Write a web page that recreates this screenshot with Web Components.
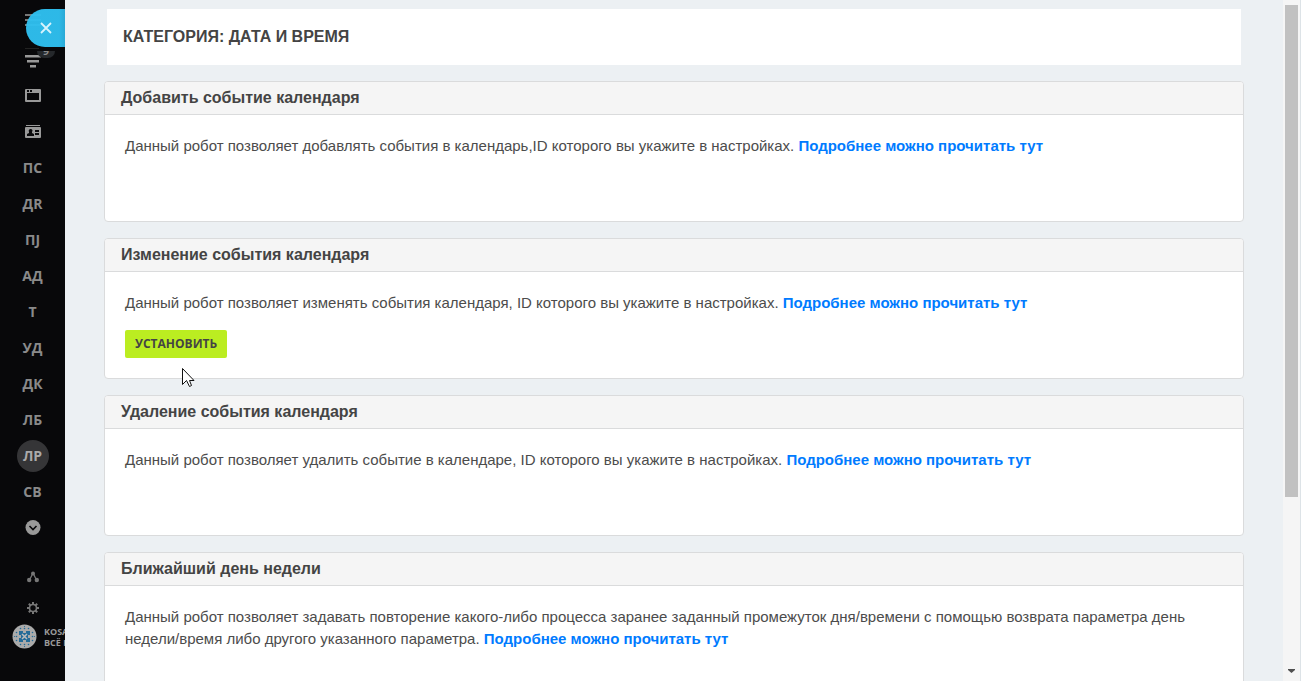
<!DOCTYPE html>
<html lang="ru">
<head>
<meta charset="utf-8">
<meta name="viewport" content="width=device-width, initial-scale=1">
<title>Роботы: дата и время</title>
<style>
    html, body {
        margin: 0;
        height: 100%;
        overflow: hidden;
    }
    body {
        font-family: "Liberation Sans", Arial, sans-serif;
        color: #444;
        background: #ecf0f3;
    }
    svg {
        display: block;
        flex-shrink: 0;
    }
</style>
</head>
<body>
<app-shell>
    <side-menu slot="menu">
        <menu-item label="Фильтр">
            <svg width="16" height="16" viewBox="0 0 16 16">
                <path d="M0 3h16v2.600H0zM2 8h12v2.600H2zM5 13h6v2.600H5z" fill="#999"/>
            </svg>
        </menu-item>
        <menu-item label="Сайты">
            <svg width="16" height="14" viewBox="0 0 16 14">
                <path fill-rule="evenodd" d="M1 0h14a1 1 0 0 1 1 1v11a1 1 0 0 1-1 1H1a1 1 0 0 1-1-1V1a1 1 0 0 1 1-1zM2 4v7h12V4zM2 1v2h2V1zM5 1v2h2V1z" fill="#999"/>
            </svg>
        </menu-item>
        <menu-item label="Контакты">
            <svg width="16" height="14" viewBox="0 0 16 14">
                <path d="M1 0h14v1H1z" fill="#999"/>
                <rect y="2" width="16" height="11" rx="1" fill="#999"/>
                <path d="M6 4a2 2 0 0 1 1 3l0 1 2 1v2H2V9l2-1V7a2 2 0 0 1 2-3zM10 5h4v2h-4zM10 8h4v2h-4z" fill="#08080a"/>
            </svg>
        </menu-item>
        <menu-item>ПС</menu-item>
        <menu-item>ДR</menu-item>
        <menu-item>ПJ</menu-item>
        <menu-item>АД</menu-item>
        <menu-item>Т</menu-item>
        <menu-item>УД</menu-item>
        <menu-item>ДК</menu-item>
        <menu-item>ЛБ</menu-item>
        <menu-item active>ЛР</menu-item>
        <menu-item>СВ</menu-item>
        <menu-item label="Ещё">
            <svg width="16" height="16" viewBox="0 0 16 16">
                <circle cx="8" cy="7.500" r="7.500" fill="#999"/>
                <path d="M4.500 6L8 9.500 11.500 6" fill="none" stroke="#08080a" stroke-width="1.600"/>
            </svg>
        </menu-item>
    </side-menu>

    <category-title>Категория: Дата и время</category-title>
    <robot-card>
        <span slot="title">Добавить событие календаря</span>
        Данный робот позволяет добавлять события в календарь,ID которого вы укажите в настройках.
    </robot-card>
    <robot-card installable>
        <span slot="title">Изменение события календаря</span>
        Данный робот позволяет изменять события календаря, ID которого вы укажите в настройках.
    </robot-card>
    <robot-card>
        <span slot="title">Удаление события календаря</span>
        Данный робот позволяет удалить событие в календаре, ID которого вы укажите в настройках.
    </robot-card>
    <robot-card>
        <span slot="title">Ближайший день недели</span>
        Данный робот позволяет задавать повторение какого-либо процесса заранее заданный промежуток дня/времени с помощью возврата параметра день недели/время либо другого указанного параметра.
    </robot-card>
</app-shell>

<script>
class AppShell extends HTMLElement {
    constructor() {
        super();
        this.attachShadow({mode: "open"}).innerHTML = `
        <style>
        * {
            box-sizing: border-box;
        }
        :host {
            display: flex;
            height: 100vh;
            position: relative;
            overflow: hidden;
        }
        main {
            flex: 1;
            min-width: 0;
            display: flex;
            flex-direction: column;
            gap: 16px;
            padding: 9px 39px 0;
            overflow: hidden;
        }
        ::slotted(*) {
            flex-shrink: 0;
        }
        /* mouse pointer floats over the page */
        .pointer {
            position: absolute;
            left: 182px;
            top: 367px;
        }
        </style>
        <slot name="menu"></slot>
        <main><slot></slot></main>
        <scroll-track></scroll-track>
        <svg class="pointer" width="13" height="21" viewBox="0 0 13 21">
            <path d="M.5 1.500v16l4-4 3 6 2-1-2-5h4.500z" fill="#fff" stroke="#111"/>
        </svg>`;
    }
}

class SideMenu extends HTMLElement {
    constructor() {
        super();
        this.attachShadow({mode: "open"}).innerHTML = `
        <style>
        * {
            box-sizing: border-box;
        }
        :host {
            width: 65px;
            display: flex;
            flex-direction: column;
            position: relative;
            overflow: hidden;
            background: #08080a;
            color: #8a8a8a;
            font-family: "Open Sans", sans-serif;
        }
        svg {
            display: block;
        }
        .top {
            height: 42px;
            padding: 14px 0 0 25px;
        }
        nav {
            display: flex;
            flex-direction: column;
        }
        .tools {
            display: flex;
            flex-direction: column;
            align-items: center;
            gap: 19px;
            padding: 25px 0 10px 1px;
        }
        .tools a {
            display: block;
        }
        .brand {
            display: flex;
            align-items: center;
            gap: 7px;
            padding-left: 12px;
            color: #999;
            font-size: 9px;
            font-weight: 700;
            line-height: 11px;
            white-space: nowrap;
            text-decoration: none;
        }
        .brand svg {
            flex-shrink: 0;
        }
        /* close tab and counter lie over the menu */
        .close {
            position: absolute;
            right: 0;
            top: 9px;
            width: 39px;
            height: 38px;
            padding: 0 0 0 13px;
            border: 0;
            border-radius: 19px 0 0 19px;
            background: linear-gradient(90deg, #2fc0f0f5 85%, #29a9d5);
        }
        .count {
            position: absolute;
            left: 37px;
            top: 44px;
            width: 18px;
            border-radius: 7px;
            background: #25282b;
            font-size: 11px;
            font-weight: 700;
            line-height: 14px;
            text-align: center;
            clip-path: inset(7px 0 0);
        }
        </style>
        <div class="top">
            <svg width="16" height="36" viewBox="0 0 16 36">
                <path d="M0 0h16v2H0zM0 5h16v2H0zM0 10h16v2H0z" fill="#777"/>
                <path d="M0 34h14v1H0z" fill="#222"/>
            </svg>
        </div>
        <nav><slot></slot></nav>
        <div class="tools">
            <a href="#" aria-label="Карта">
                <svg width="12" height="12" viewBox="0 0 12 12">
                    <path d="M6 2L2.500 9M6 2l3.500 7" stroke="#777" stroke-width="1.300"/>
                    <g fill="#777"><circle cx="6" cy="2.500" r="2"/><circle cx="2.200" cy="9" r="2.200"/><circle cx="9.800" cy="9" r="2.200"/></g>
                </svg>
            </a>
            <a href="#" aria-label="Настройки">
                <svg width="12" height="12" viewBox="0 0 12 12">
                    <path d="M6 0v12M0 6h12M1.800 1.800l8.400 8.400M10.200 1.800l-8.400 8.400" stroke="#777" stroke-width="2"/>
                    <circle cx="6" cy="6" r="4.300" fill="#777"/><circle cx="6" cy="6" r="2.700" fill="#08080a"/>
                </svg>
            </a>
        </div>
        <a class="brand" href="#">
            <svg width="25" height="25" viewBox="0 0 25 25">
                <circle cx="12.500" cy="12.500" r="12" fill="#aaa"/>
                <g fill="none" stroke="#246b98" stroke-linecap="round">
                    <path d="M8.500 4.500h9M8.500 20.500h9M4.500 8.500v9M20.500 8.500v9" stroke-width="1.600" stroke-dasharray="0 4"/>
                    <path d="M12.500 2.500v0M12.500 22.500v0M2.500 12.500h0M22.500 12.500h0" stroke-width="1.200"/>
                </g>
                <path d="M7 7h4v2h3V7h4v4h-2v3h2v4h-4v-2h-3v2H7v-4h2v-3H7z" fill="#246b98"/>
                <path d="M10 10l5 5M15 10l-5 5" stroke="#bbb" stroke-width="1.500"/>
            </svg>
            <span>KOSA<br>ВСЁ П</span>
        </a>
        <span class="count">9</span>
        <button class="close" aria-label="Закрыть">
            <svg width="14" height="14" viewBox="0 0 14 14"><path d="M2 2l10 10M12 2L2 12" stroke="#d8f3fd" stroke-width="1.800"/></svg>
        </button>`;
    }
}

class MenuItem extends HTMLElement {
    constructor() {
        super();
        this.attachShadow({mode: "open"}).innerHTML = `
        <style>
        :host {
            display: flex;
            justify-content: center;
            align-items: center;
            height: 36px;
        }
        a {
            box-sizing: border-box;
            display: flex;
            justify-content: center;
            align-items: center;
            width: 32px;
            height: 32px;
            border-radius: 50%;
            color: inherit;
            font-size: 14px;
            font-weight: 700;
            text-decoration: none;
        }
        :host(:not([label])) a {
            padding-bottom: 2px;
        }
        :host([active]) a {
            background: #353537;
            color: #aaa;
        }
        </style>
        <a href="#"><slot></slot></a>`;
    }

    connectedCallback() {
        if (this.hasAttribute("label")) {
            this.shadowRoot.querySelector("a").setAttribute("aria-label", this.getAttribute("label"));
        }
    }
}

class CategoryTitle extends HTMLElement {
    constructor() {
        super();
        this.attachShadow({mode: "open"}).innerHTML = `
        <style>
        :host {
            display: block;
            margin: 0 3px;
            padding: 16px;
            background: #fff;
        }
        h1 {
            margin: 0;
            font-size: 16px;
            line-height: 24px;
            text-transform: uppercase;
        }
        </style>
        <h1><slot></slot></h1>`;
    }
}

class RobotCard extends HTMLElement {
    constructor() {
        super();
        this.attachShadow({mode: "open"});
    }

    connectedCallback() {
        this.render();
    }

    render() {
        const button = this.hasAttribute("installable") ? `<button>Установить</button>` : "";
        this.shadowRoot.innerHTML = `
        <style>
        * {
            box-sizing: border-box;
        }
        :host {
            display: block;
            border: 1px solid #dadbdc;
            border-radius: 4px;
            background: #fff;
            overflow: hidden;
        }
        h2 {
            margin: 0;
            padding: 4px 16px;
            border-bottom: 1px solid #dadbdc;
            background: #f5f5f5;
            font-size: 16px;
            line-height: 24px;
        }
        .body {
            display: flex;
            flex-direction: column;
            align-items: flex-start;
            gap: 16px;
            min-height: 106px;
            padding: 20px;
        }
        p {
            margin: 0;
            color: #4c4c4c;
            font-size: 15px;
            line-height: 22px;
        }
        a {
            color: #007bff;
            font-weight: 700;
            text-decoration: none;
        }
        button {
            height: 28px;
            padding: 0 10px 2px;
            border: 0;
            border-radius: 2px;
            background: #bbed21;
            color: #444;
            font-family: "Open Sans", sans-serif;
            font-size: 12px;
            font-weight: 700;
            text-transform: uppercase;
        }
        </style>
        <h2><slot name="title"></slot></h2>
        <div class="body">
            <p><slot></slot><a href="#">Подробнее можно прочитать тут</a></p>
            ${button}
        </div>`;
    }
}

class ScrollTrack extends HTMLElement {
    constructor() {
        super();
        this.attachShadow({mode: "open"}).innerHTML = `
        <style>
        :host {
            box-sizing: border-box;
            display: flex;
            flex-direction: column;
            justify-content: space-between;
            width: 18px;
            padding: 5px 2px 7px;
            border-right: 1px solid #dde3e7;
            background: #f5f5f5;
        }
        .thumb {
            width: 13px;
            height: calc(73vh - 5px);
            background: #c1c1c1;
        }
        svg {
            display: block;
            margin-left: 3px;
        }
        </style>
        <div class="thumb"></div>
        <svg width="7" height="6" viewBox="0 0 7 6"><path d="M0 1h7v1L3.500 5 0 2z" fill="#505050"/></svg>`;
    }
}

customElements.define("menu-item", MenuItem);
customElements.define("side-menu", SideMenu);
customElements.define("category-title", CategoryTitle);
customElements.define("robot-card", RobotCard);
customElements.define("scroll-track", ScrollTrack);
customElements.define("app-shell", AppShell);
</script>
</body>
</html>
